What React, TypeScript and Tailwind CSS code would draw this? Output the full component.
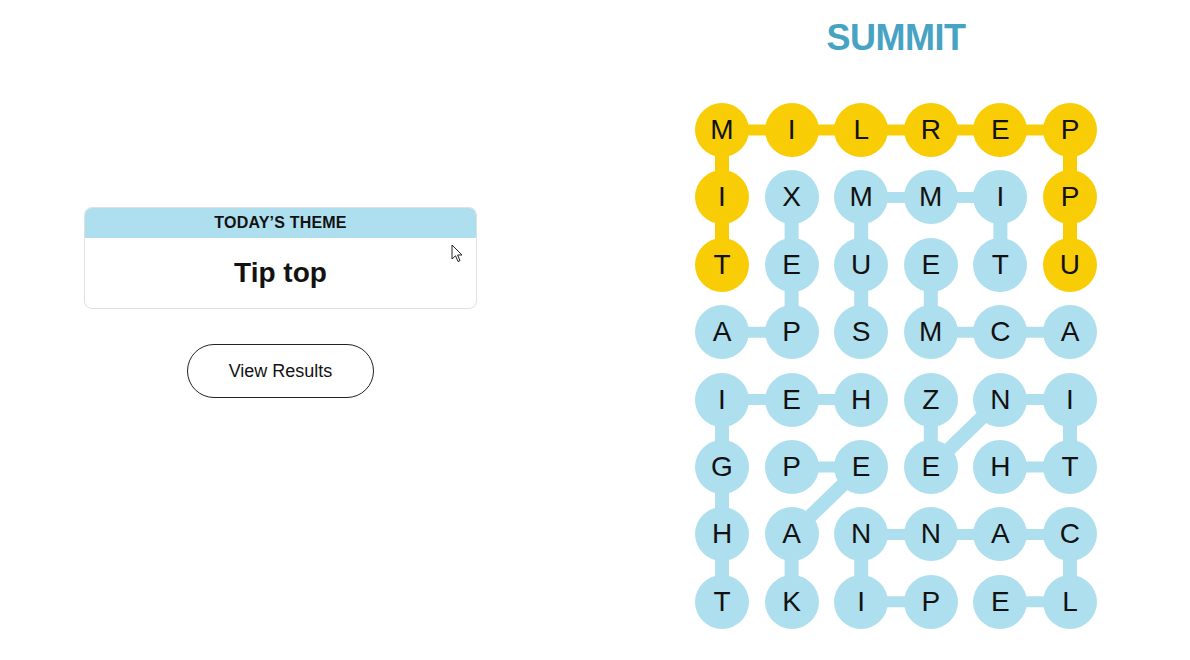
const BOARD = [
  "MILREP",
  "IXMMIP",
  "TEUETU",
  "APSMCA",
  "IEHZNI",
  "GPEEHT",
  "HANNAC",
  "TKIPEL",
];

// cells that belong to the spangram
const YELLOW = new Set(["0,0", "0,1", "0,2", "0,3", "0,4", "0,5", "1,0", "2,0", "1,5", "2,5"]);

type Link = [number, number, number, number, boolean?];

// [row, col, row, col, yellow]
const LINKS: Link[] = [
  [0, 0, 0, 1, true], [0, 1, 0, 2, true], [0, 2, 0, 3, true], [0, 3, 0, 4, true], [0, 4, 0, 5, true],
  [0, 0, 1, 0, true], [1, 0, 2, 0, true], [0, 5, 1, 5, true], [1, 5, 2, 5, true],
  [1, 1, 2, 1], [2, 1, 3, 1], [3, 0, 3, 1],
  [1, 2, 1, 3], [1, 3, 1, 4], [1, 2, 2, 2], [2, 2, 3, 2], [1, 4, 2, 4],
  [2, 3, 3, 3], [3, 3, 3, 4], [3, 4, 3, 5],
  [4, 0, 4, 1], [4, 1, 4, 2], [4, 0, 5, 0], [5, 0, 6, 0], [6, 0, 7, 0],
  [4, 4, 4, 5], [4, 5, 5, 5], [5, 4, 5, 5], [4, 3, 5, 3], [4, 4, 5, 3],
  [5, 1, 5, 2], [5, 2, 6, 1], [6, 1, 7, 1],
  [6, 2, 6, 3], [6, 3, 6, 4], [6, 4, 6, 5], [6, 2, 7, 2], [7, 2, 7, 3], [6, 5, 7, 5], [7, 4, 7, 5],
];

const D = 54;
const PX = 69.6;
const PY = 67.4;
const cx = (c: number) => D / 2 + c * PX;
const cy = (r: number) => D / 2 + r * PY;

const Board = () => {
  return (
    <div className="relative w-[402px] h-[526px]">
      <svg className="absolute inset-0" width="402" height="526">
        {LINKS.map(([r1, c1, r2, c2, y], i) => (
          <line
            key={i}
            x1={cx(c1)}
            y1={cy(r1)}
            x2={cx(c2)}
            y2={cy(r2)}
            stroke={y ? "#f8cd05" : "#aedfee"}
            strokeWidth={r1 === r2 ? 11 : 14}
          />
        ))}
      </svg>
      <div className="relative grid grid-cols-6 gap-x-[15.6px] gap-y-[13.4px]">
        {BOARD.map((row, r) =>
          row.split("").map((ch, c) => (
            <div
              key={r + "-" + c}
              className={
                "w-[54px] h-[54px] rounded-full flex items-center justify-center text-[28px] text-[#121212] " +
                (YELLOW.has(r + "," + c) ? "bg-[#f8cd05]" : "bg-[#aedfee]")
              }
            >
              {ch}
            </div>
          ))
        )}
      </div>
    </div>
  );
};

export default function App() {
  return (
    <div className="w-[1190px] h-[660px] bg-white flex font-['Liberation_Sans',Arial,sans-serif] overflow-hidden">
      <div className="pl-[84px] pt-[207px] flex flex-col items-center w-[477px]">
        <div className="relative w-[393px] rounded-lg border border-[#e0e0e0] overflow-hidden">
          <div className="h-[30px] bg-[#aedfee] flex items-center justify-center text-[16px] font-bold text-[#121212] tracking-[0.2px]">
            TODAY’S THEME
          </div>
          <div className="h-[70px] flex items-center justify-center text-[28px] font-bold text-[#121212]">
            Tip top
          </div>
          <svg className="absolute left-[366px] top-[36px]" width="13" height="20" viewBox="0 0 13 20">
            <path d="M1 1 L1 15 L4.5 11.8 L7 17.5 L9 16.6 L6.6 11 L11 11 Z" fill="#fff" stroke="#222" strokeWidth="1" strokeLinejoin="round" />
          </svg>
        </div>
        <button className="mt-[35px] w-[187px] h-[54px] rounded-full border border-[#222] bg-white text-[18px] text-[#121212]">
          View Results
        </button>
      </div>
      <div className="ml-[218px] flex flex-col items-center">
        <div className="mt-[16px] h-[44px] flex items-center text-[36px] font-bold text-[#47a3c3] tracking-[-0.5px]">
          SUMMIT
        </div>
        <div className="mt-[43px]">
          <Board />
        </div>
      </div>
    </div>
  );
}
